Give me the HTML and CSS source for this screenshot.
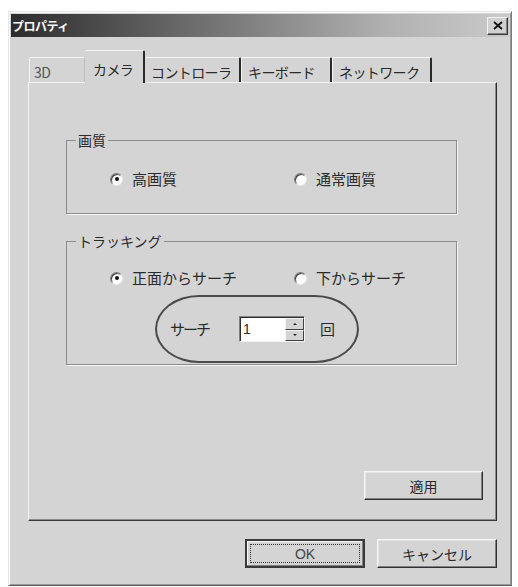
FILE: index.html
```html
<!DOCTYPE html>
<html lang="ja">
<head>
<meta charset="utf-8">
<title>プロパティ</title>
<link rel="stylesheet" href="styles.css">
</head>
<body>
<div class="dialog">
  <div class="titlebar">
    <span class="title">プロパティ</span>
    <span class="close"><svg width="10" height="9" viewBox="0 0 10 9"><path d="M1 1 L9 8 M9 1 L1 8" stroke="#111" stroke-width="1.8"/></svg></span>
  </div>
  <div class="content">
    <div class="tabs">
      <div class="tab t1">3D</div>
      <div class="tab t2 active">カメラ</div>
      <div class="tab t3">コントローラ</div>
      <div class="tab t4">キーボード</div>
      <div class="tab t5">ネットワーク</div>
    </div>
    <div class="panel">
      <fieldset class="group quality">
        <legend>画質</legend>
        <div class="radios">
          <span class="opt"><span class="radio checked"></span>高画質</span>
          <span class="opt"><span class="radio"></span>通常画質</span>
        </div>
      </fieldset>
      <fieldset class="group tracking">
        <legend>トラッキング</legend>
        <div class="radios">
          <span class="opt"><span class="radio checked"></span>正面からサーチ</span>
          <span class="opt"><span class="radio"></span>下からサーチ</span>
        </div>
        <div class="search">
          <span class="search-label">サーチ</span>
          <span class="spin">
            <span class="spin-field">1</span>
            <span class="spin-btns">
              <span class="spin-btn up"></span>
              <span class="spin-btn down"></span>
            </span>
          </span>
          <span class="unit">回</span>
        </div>
      </fieldset>
      <div class="apply-row"><span class="btn apply">適用</span></div>
    </div>
    <div class="buttons">
      <span class="btn ok"><span class="focus">OK</span></span>
      <span class="btn">キャンセル</span>
    </div>
  </div>
</div>
</body>
</html>
```

FILE: styles.css
```css
* { box-sizing: border-box; }

body {
  margin: 0;
  padding: 11px 0 0 8px;
  background: #fff;
  font-family: "Noto Sans CJK JP", "Noto Sans", sans-serif;
  font-size: 15px;
  line-height: 18px;
  color: #2a2a2a;
}

.dialog {
  width: 504px;
  height: 575px;
  background: #d4d4d4;
  border: 1px solid;
  border-color: #e6e6e6 #7a7a7a #5a5a5a #e6e6e6;
  box-shadow: inset 1px 1px 0 #fafafa, inset -1px -1px 0 #9a9a9a;
  padding: 2px;
  display: flex;
  flex-direction: column;
}

.titlebar {
  height: 23px;
  background: linear-gradient(90deg, #2c2c2c 0%, #6a6a6a 35%, #b0b0b0 75%, #cacaca 100%);
  display: flex;
  align-items: center;
  justify-content: space-between;
  padding-left: 1px;
}

.title {
  color: #fafafa;
  font-size: 12px;
  font-weight: bold;
  line-height: 23px;
  letter-spacing: -0.5px;
}

.close {
  width: 21px;
  height: 18px;
  margin-right: 1px;
  background: #d0d0d0;
  border: 1px solid;
  border-color: #f2f2f2 #3a3a3a #3a3a3a #f2f2f2;
  box-shadow: inset -1px -1px 0 #808080;
  display: flex;
  align-items: center;
  justify-content: center;
}

.content {
  flex: 1;
  display: flex;
  flex-direction: column;
  padding: 13px 12px 15px 17px;
}

.tabs {
  display: flex;
  align-items: flex-end;
  height: 33px;
  margin-bottom: -1px;
  padding-left: 1px;
}

.tab {
  height: 26px;
  padding: 5px 0 0 6px;
  background: #d4d4d4;
  border-top: 1px solid #f4f4f4;
  border-left: 1px solid #f4f4f4;
  border-right: 2px solid #2a2a2a;
  border-radius: 2px 2px 0 0;
  white-space: nowrap;
  font-size: 14px;
  letter-spacing: -0.6px;
}

.t1 { width: 56px; padding-left: 4px; border-right: 1px solid #bcbcbc; color: #555; }
.t2 { width: 60px; }
.t3 { width: 96px; border-left: none; }
.t4 { width: 91px; }
.t5 { width: 100px; }

.tab.active {
  height: 33px;
  padding: 9px 0 0 8px;
  position: relative;
  z-index: 1;
  border-left: none;
}

.panel {
  flex: 1;
  display: flex;
  flex-direction: column;
  border: 1px solid;
  border-color: #f4f4f4 #2e2e2e #3a3a3a #f4f4f4;
  box-shadow: inset -1px -1px 0 #8a8a8a;
  padding: 48px 0 0 37px;
}

.group {
  width: 391px;
  margin: 0;
  padding: 0;
  border: 1px solid #8c8c8c;
  box-shadow: 1px 1px 0 #f6f6f6;
}

.group legend {
  margin-left: 9px;
  padding: 0 2px;
  font-size: 14px;
}

.quality { padding-bottom: 25px; }
.quality .radios { padding-top: 21px; }

.tracking { margin-top: 18px; padding-bottom: 1px; }
.tracking .radios { padding-top: 19px; }

.radios {
  display: grid;
  grid-template-columns: 184px auto;
  padding-left: 43px;
}

.opt {
  display: flex;
  align-items: center;
  gap: 9px;
  height: 18px;
}

.radio {
  width: 13px;
  height: 13px;
  border-radius: 50%;
  background: #fcfcfc;
  border: 1px solid;
  border-color: #7a7a7a #e8e8e8 #e8e8e8 #7a7a7a;
  box-shadow: inset 1px 1px 0 #3e3e3e;
  display: flex;
  align-items: center;
  justify-content: center;
}

.radio.checked::after {
  content: "";
  width: 4px;
  height: 4px;
  border-radius: 50%;
  background: #111;
}

.search {
  width: 204px;
  height: 68px;
  margin: 8px 0 0 88px;
  border: 2px solid #4a4a4a;
  border-radius: 44px / 34px;
  display: flex;
  align-items: center;
  padding-left: 13px;
}

.search-label {
  letter-spacing: -2px;
  width: 69px;
}

.spin {
  display: flex;
  width: 66px;
  height: 26px;
  border: 1px solid;
  border-color: #808080 #f4f4f4 #f4f4f4 #808080;
  background: #fff;
}

.spin-field {
  flex: 1;
  border-top: 1px solid #2e2e2e;
  border-left: 1px solid #2e2e2e;
  padding-left: 2px;
  line-height: 22px;
  font-family: "Liberation Sans", sans-serif;
  font-size: 14px;
}

.spin-btns {
  width: 19px;
  display: flex;
  flex-direction: column;
  border-top: 1px solid #2e2e2e;
}

.spin-btn {
  flex: 1;
  background: #d4d4d4;
  border: 1px solid;
  border-color: #f4f4f4 #404040 #404040 #f4f4f4;
  display: flex;
  align-items: center;
  justify-content: center;
}

.spin-btn::after {
  content: "";
  border-left: 2px solid transparent;
  border-right: 2px solid transparent;
}

.spin-btn.up::after { border-bottom: 2px solid #222; }
.spin-btn.down::after { border-top: 2px solid #222; }

.unit { margin-left: 15px; }

.apply-row {
  margin-top: auto;
  margin-bottom: 20px;
  padding-right: 13px;
  display: flex;
  justify-content: flex-end;
}

.btn {
  width: 120px;
  height: 29px;
  display: flex;
  align-items: center;
  justify-content: center;
  background: #d4d4d4;
  border: 1px solid;
  border-color: #f6f6f6 #303030 #303030 #f6f6f6;
  box-shadow: inset -1px -1px 0 #808080, inset 1px 1px 0 #e4e4e4;
  font-size: 14px;
}

.btn.apply { width: 119px; }

.buttons {
  display: flex;
  justify-content: flex-end;
  gap: 12px;
  margin-top: 18px;
}

.btn.ok {
  border: 2px solid #3a3a3a;
  box-shadow: inset -1px -1px 0 #808080, inset 1px 1px 0 #f6f6f6;
  padding: 3px;
}

.btn.ok .focus {
  flex: 1;
  align-self: stretch;
  border: 1px dotted #333;
  display: flex;
  align-items: center;
  justify-content: center;
  font-family: "Liberation Sans", sans-serif;
  font-size: 14px;
  color: #444;
}
```
